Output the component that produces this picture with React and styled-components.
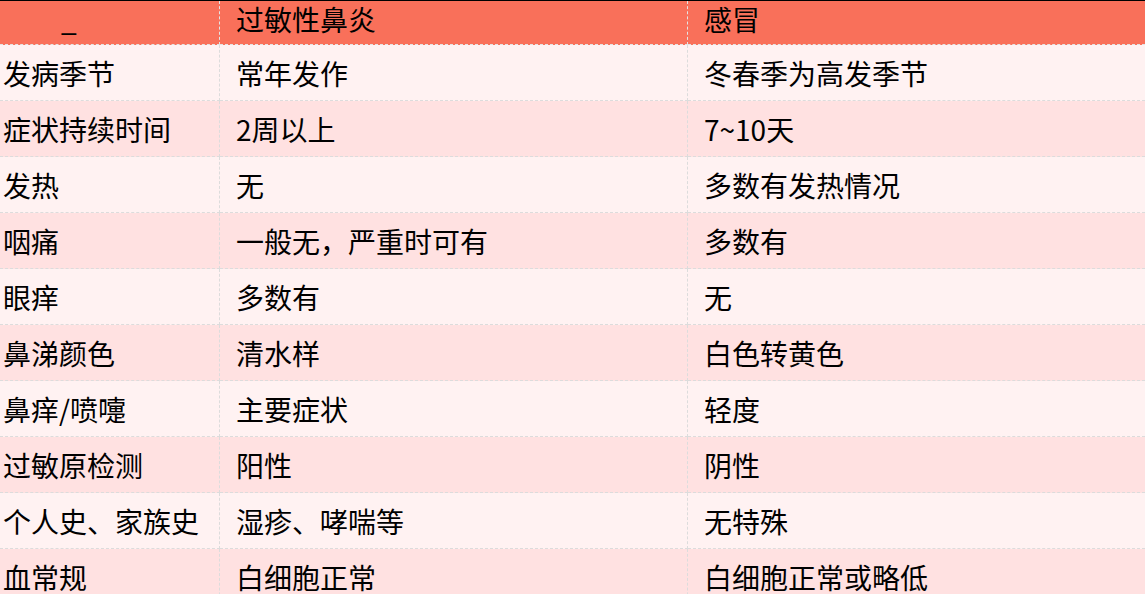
import styled, { createGlobalStyle } from 'styled-components';

const GlobalStyle = createGlobalStyle`
  html, body {
    margin: 0;
    padding: 0;
    background: #fff;
    overflow: hidden;
  }
`

const rows = [
    ['发病季节', '常年发作', '冬春季为高发季节'],
    ['症状持续时间', '2周以上', '7~10天'],
    ['发热', '无', '多数有发热情况'],
    ['咽痛', '一般无，严重时可有', '多数有'],
    ['眼痒', '多数有', '无'],
    ['鼻涕颜色', '清水样', '白色转黄色'],
    ['鼻痒/喷嚏', '主要症状', '轻度'],
    ['过敏原检测', '阳性', '阴性'],
    ['个人史、家族史', '湿疹、哮喘等', '无特殊'],
    ['血常规', '白细胞正常', '白细胞正常或略低'],
]

function App() {
    return (
        <>
            <GlobalStyle />
            <Table>
                <HeadCell $first>_</HeadCell>
                <HeadCell>过敏性鼻炎</HeadCell>
                <HeadCell $last>感冒</HeadCell>
                {rows.map((row, i) =>
                    row.map((text, j) => (
                        <Cell key={i + '-' + j} $shade={i % 2 === 1} $first={j === 0} $last={j === 2}>
                            {text}
                        </Cell>
                    ))
                )}
            </Table>
        </>
    )
}

export default App

const Table = styled.div`
    display: grid;
    grid-template-columns: 220px 468px 1fr;
    grid-auto-rows: 56px;
    grid-template-rows: 44px;
    border-top: 1px solid #000;
    font-family: "Noto Sans CJK SC", "Microsoft YaHei", sans-serif;
    font-size: 28px;
    color: #000;
`

const HeadCell = styled.div`
    box-sizing: border-box;
    display: flex;
    align-items: flex-start;
    line-height: 36px;
    padding-left: ${p => (p.$first ? '61px' : '16px')};
    background: #f9705a;
    border-bottom: 1px dashed #e4e4e4;
    border-right: ${p => (p.$last ? 'none' : '1px dashed #e4e4e4')};
    white-space: nowrap;
`

const Cell = styled.div`
    box-sizing: border-box;
    display: flex;
    align-items: center;
    padding-left: ${p => (p.$first ? '3px' : '16px')};
    background: ${p => (p.$shade ? '#ffe1e1' : '#fff2f2')};
    border-bottom: 1px dashed #dcdcdc;
    border-right: ${p => (p.$last ? 'none' : '1px dashed #dcdcdc')};
    white-space: nowrap;
`
